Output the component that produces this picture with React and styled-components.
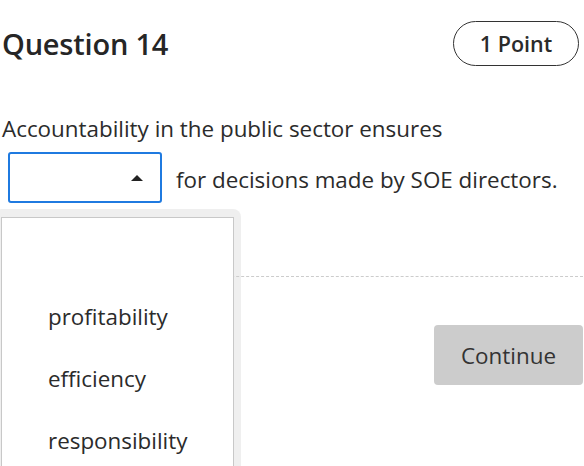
import React from "react";
import styled, { createGlobalStyle } from "styled-components";

const GlobalStyle = createGlobalStyle`
    body {
        margin: 0;
        background: #fff;
        font-family: "Open Sans", "Noto Sans", sans-serif;
        color: #2b2b2b;
    }
`

const Page = styled.div`
    position: relative;
    width: 584px;
    height: 466px;
    overflow: hidden;
    padding: 0 1px 0 2px;
    box-sizing: border-box;
`
const Header = styled.div`
    display: flex;
    justify-content: space-between;
    align-items: center;
    padding-top: 20px;
    height: 46px;
`
const Title = styled.h2`
    margin: 0;
    font-size: 29px;
    font-weight: 600;
    color: #262626;
    letter-spacing: -0.2px;
`
const Points = styled.div`
    height: 45px;
    width: 126px;
    box-sizing: border-box;
    display: flex;
    align-items: center;
    justify-content: center;
    border: 1px solid #333;
    border-radius: 24px;
    font-size: 21.5px;
    font-weight: 600;
    margin-right: 4px;
`
const Prompt = styled.p`
    margin: 48px 0 0 0;
    font-size: 22.4px;
    line-height: 30px;
`
const Row = styled.div`
    position: relative;
    display: flex;
    align-items: center;
    gap: 14px;
    margin-top: 8px;
    padding-left: 6px;
`
const Select = styled.div`
    width: 154px;
    height: 51px;
    border: 2px solid #1f7ae0;
    border-radius: 3px;
    box-sizing: border-box;
    display: flex;
    align-items: center;
    justify-content: flex-end;
    padding-right: 17px;
`
const Caret = styled.span`
    width: 0;
    height: 0;
    border-left: 6px solid transparent;
    border-right: 6px solid transparent;
    border-bottom: 6px solid #222;
`
const RowText = styled.span`
    font-size: 22.4px;
    padding-top: 3px;
`
const Divider = styled.div`
    position: relative;
    z-index: 1;
    margin-top: 73px;
    border-top: 1px dashed #ccc;
`
const Footer = styled.div`
    display: flex;
    justify-content: flex-end;
    margin-top: 48px;
`
const Button = styled.button`
    width: 149px;
    height: 60px;
    border: none;
    border-radius: 4px;
    background: #cccccc;
    color: #333;
    font-family: inherit;
    font-size: 22.4px;
`
const Menu = styled.div`
    position: absolute;
    left: -6px;
    top: 209px;
    width: 247px;
    height: 280px;
    background: #efefef;
    border-radius: 8px;
    padding: 8px 7px 0 7px;
    box-sizing: border-box;
`
const MenuList = styled.ul`
    position: relative;
    z-index: 2;
    list-style: none;
    margin: 0;
    padding: 0;
    height: 100%;
    background: #fff;
    border: 1px solid #c8c8c8;
    box-sizing: border-box;
`
const Option = styled.li`
    height: 62px;
    display: flex;
    align-items: center;
    padding-left: 46px;
    font-size: 22.4px;
    &:first-child {
        height: 67px;
    }
`

const App = () => {
    const options = ["", "profitability", "efficiency", "responsibility"];
    return (
        <>
            <GlobalStyle />
            <Page>
                <Header>
                    <Title>Question 14</Title>
                    <Points>1 Point</Points>
                </Header>
                <Prompt>Accountability in the public sector ensures</Prompt>
                <Row>
                    <Select>
                        <Caret />
                    </Select>
                    <RowText>for decisions made by SOE directors.</RowText>
                </Row>
                <Divider />
                <Footer>
                    <Button>Continue</Button>
                </Footer>
                <Menu>
                    <MenuList>
                        {options.map((o, i) => (
                            <Option key={i}>{o}</Option>
                        ))}
                    </MenuList>
                </Menu>
            </Page>
        </>
    )
}

export default App;
